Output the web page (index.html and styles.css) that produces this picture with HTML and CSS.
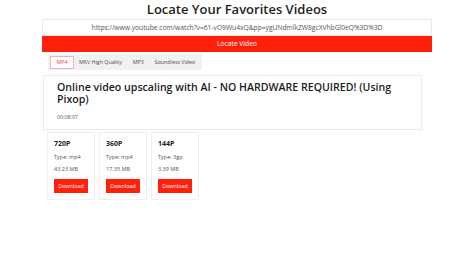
FILE: index.html
```html
<!DOCTYPE html>
<html>
<head>
<meta charset="utf-8">
<link rel="stylesheet" href="styles.css">
</head>
<body>
<div class="page">
  <h1 class="title">Locate Your Favorites Videos</h1>
  <div class="search">
    <div class="url">https://www.youtube.com/watch?v=61-vO9Wu4xQ&amp;pp=ygUNdmlkZW8gcXVhbGl0eQ%3D%3D</div>
    <div class="locate">Locate Video</div>
  </div>
  <div class="tabs">
    <span class="tab active">MP4</span>
    <span class="tab">MKV High Quality</span>
    <span class="tab">MP3</span>
    <span class="tab">Soundless Video</span>
  </div>
  <div class="video">
    <div class="video-title">Online video upscaling with AI - NO HARDWARE REQUIRED! (Using Pixop)</div>
    <div class="duration">00:08:07</div>
  </div>
  <div class="formats">
    <div class="fmt">
      <div class="q">720P</div>
      <div class="meta">Type: mp4</div>
      <div class="meta size">43.23 MB</div>
      <div class="dl">Download</div>
    </div>
    <div class="fmt">
      <div class="q">360P</div>
      <div class="meta">Type: mp4</div>
      <div class="meta size">17.35 MB</div>
      <div class="dl">Download</div>
    </div>
    <div class="fmt">
      <div class="q">144P</div>
      <div class="meta">Type: 3gp</div>
      <div class="meta size">3.39 MB</div>
      <div class="dl">Download</div>
    </div>
  </div>
</div>
</body>
</html>
```
FILE: styles.css
```css
html, body {
  margin: 0;
  padding: 0;
  background: #ffffff;
}
body {
  font-family: "Open Sans", "Noto Sans", "Liberation Sans", sans-serif;
  color: #222;
}
.page {
  width: 390px;
  margin: 0 0 0 42px;
}
.title {
  margin: 0;
  height: 19px;
  font-size: 13px;
  line-height: 19px;
  font-weight: 600;
  text-align: center;
  color: #1e1e1e;
}
.search {
  display: flex;
  flex-direction: column;
}
.url {
  height: 15px;
  border: 1px solid #e8e8e8;
  font-size: 6.7px;
  line-height: 15px;
  color: #555;
  text-align: center;
  white-space: nowrap;
}
.locate {
  height: 16px;
  background: #ff1f0a;
  color: #fff;
  font-size: 6.7px;
  line-height: 16px;
  text-align: center;
}
.tabs {
  display: flex;
  align-items: flex-start;
  width: max-content;
  margin: 2px 0 0 6px;
  padding: 2px 1px 1px 2px;
  background: #f1f1f1;
}
.tab {
  font-size: 5.3px;
  line-height: 11px;
  padding: 0 4.5px;
  color: #4a4a4a;
  border: 1px solid transparent;
}
.tab.active {
  background: #fff;
  border-color: #f2b3ab;
  color: #e8402c;
  padding: 0 5.5px;
}
.tab.active + .tab {
  padding-left: 4px;
}
.video {
  margin: 5px 10px 0 1px;
  height: 48px;
  border: 1px solid #ececec;
  padding: 4.5px 13px 0 13px;
}
.video-title {
  font-size: 10.6px;
  line-height: 12px;
  font-weight: 600;
  color: #1c1c1c;
}
.duration {
  margin-top: 8.5px;
  font-size: 5.3px;
  line-height: 8px;
  color: #555;
}
.formats {
  display: flex;
  gap: 4px;
  margin: 2px 0 0 5px;
}
.fmt {
  width: 34px;
  border: 1px solid #efefef;
  padding: 6px 6px 6px 6px;
}
.q {
  font-size: 7px;
  line-height: 10px;
  font-weight: 700;
  color: #222;
}
.meta {
  margin-top: 3px;
  font-size: 5.5px;
  line-height: 10px;
  color: #555;
}
.meta.size {
  margin-top: 2px;
}
.dl {
  margin-top: 5px;
  height: 14px;
  background: #ff1f0a;
  color: #fff;
  font-size: 5.4px;
  line-height: 14px;
  text-align: center;
}
```
